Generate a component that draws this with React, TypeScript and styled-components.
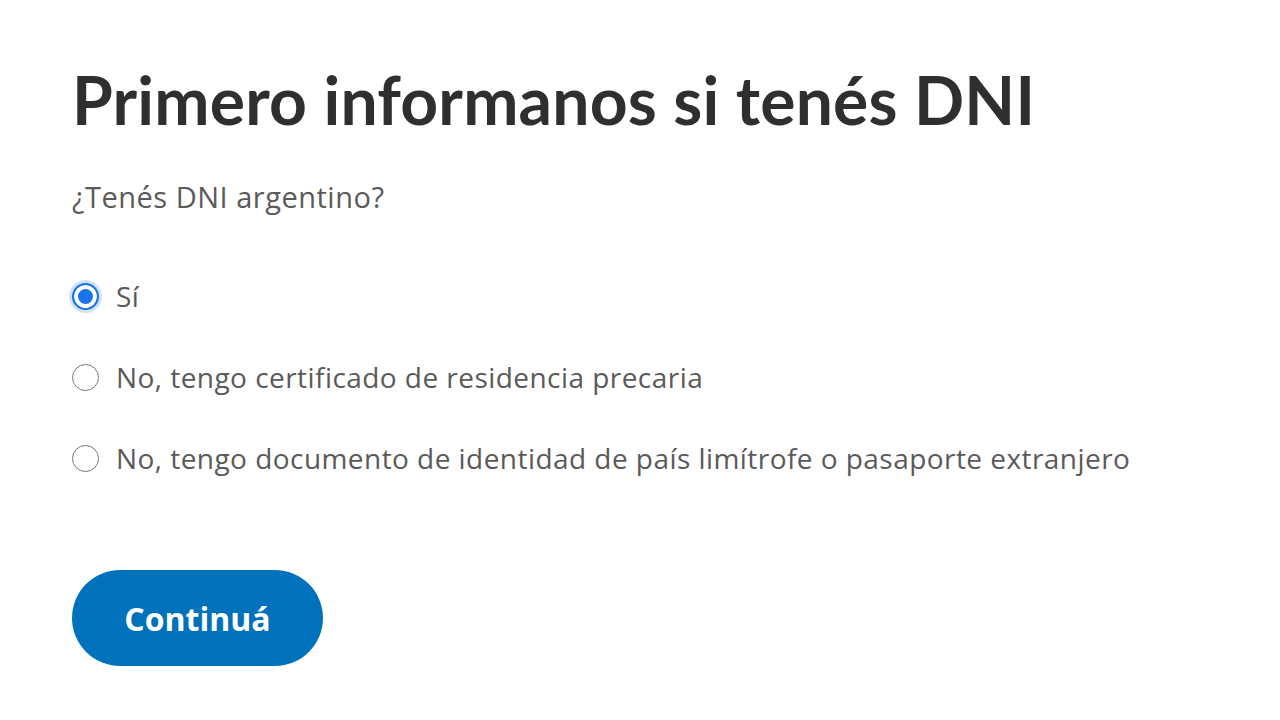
import React from "react";
import styled, { createGlobalStyle } from "styled-components";

const GlobalStyle = createGlobalStyle`
    html, body {
        margin: 0;
        padding: 0;
        background: #ffffff;
    }
    body {
        font-family: "Open Sans", Lato, "Liberation Sans", sans-serif;
        color: #333333;
    }
`;

const Page = styled.main`
    padding: 61px 72px 0 72px;
    box-sizing: border-box;
    width: 1280px;
    height: 720px;
`;

const Title = styled.h1`
    margin: 0;
    font-family: Lato, "Open Sans", sans-serif;
    font-size: 66px;
    line-height: 77px;
    font-weight: 700;
    letter-spacing: 0.2px;
    color: #2f2f2f;
`;

const Question = styled.p`
    margin: 42px 0 0 0;
    font-size: 29px;
    line-height: 34px;
    letter-spacing: 0.5px;
    color: #5a5a5a;
`;

const Options = styled.div`
    display: flex;
    flex-direction: column;
    gap: 47px;
    margin-top: 65px;
`;

const OptionRow = styled.label`
    display: flex;
    align-items: center;
    gap: 17px;
    font-size: 28px;
    line-height: 34px;
    letter-spacing: 0.45px;
    color: #5a5a5a;
    cursor: pointer;
`;

const RadioDot = styled.span<{ $checked: boolean }>`
    flex: none;
    width: 27px;
    height: 27px;
    box-sizing: border-box;
    border-radius: 50%;
    border: ${(p) => (p.$checked ? "2px solid #1a73e8" : "1.5px solid #767676")};
    background: ${(p) => (p.$checked ? "#1a73e8" : "#ffffff")};
    box-shadow: ${(p) => (p.$checked ? "inset 0 0 0 4px #ffffff, 0 0 0 3px #cfe3fa" : "none")};
`;

const ContinueButton = styled.button`
    margin-top: 95px;
    width: 251px;
    height: 96px;
    border: none;
    border-radius: 48px;
    background: #0072bb;
    color: #ffffff;
    font-family: inherit;
    font-size: 32px;
    font-weight: 700;
    cursor: pointer;
`;

const options = [
    "Sí",
    "No, tengo certificado de residencia precaria",
    "No, tengo documento de identidad de país limítrofe o pasaporte extranjero",
];

export default function App() {
    const [selected, setSelected] = React.useState(0);

    return (
        <>
            <GlobalStyle />
            <Page>
                <Title>Primero informanos si tenés DNI</Title>
                <Question>¿Tenés DNI argentino?</Question>
                <Options>
                    {options.map((text, i) => (
                        <OptionRow key={text} onClick={() => setSelected(i)}>
                            <RadioDot $checked={selected === i} />
                            {text}
                        </OptionRow>
                    ))}
                </Options>
                <ContinueButton>Continuá</ContinueButton>
            </Page>
        </>
    );
}
